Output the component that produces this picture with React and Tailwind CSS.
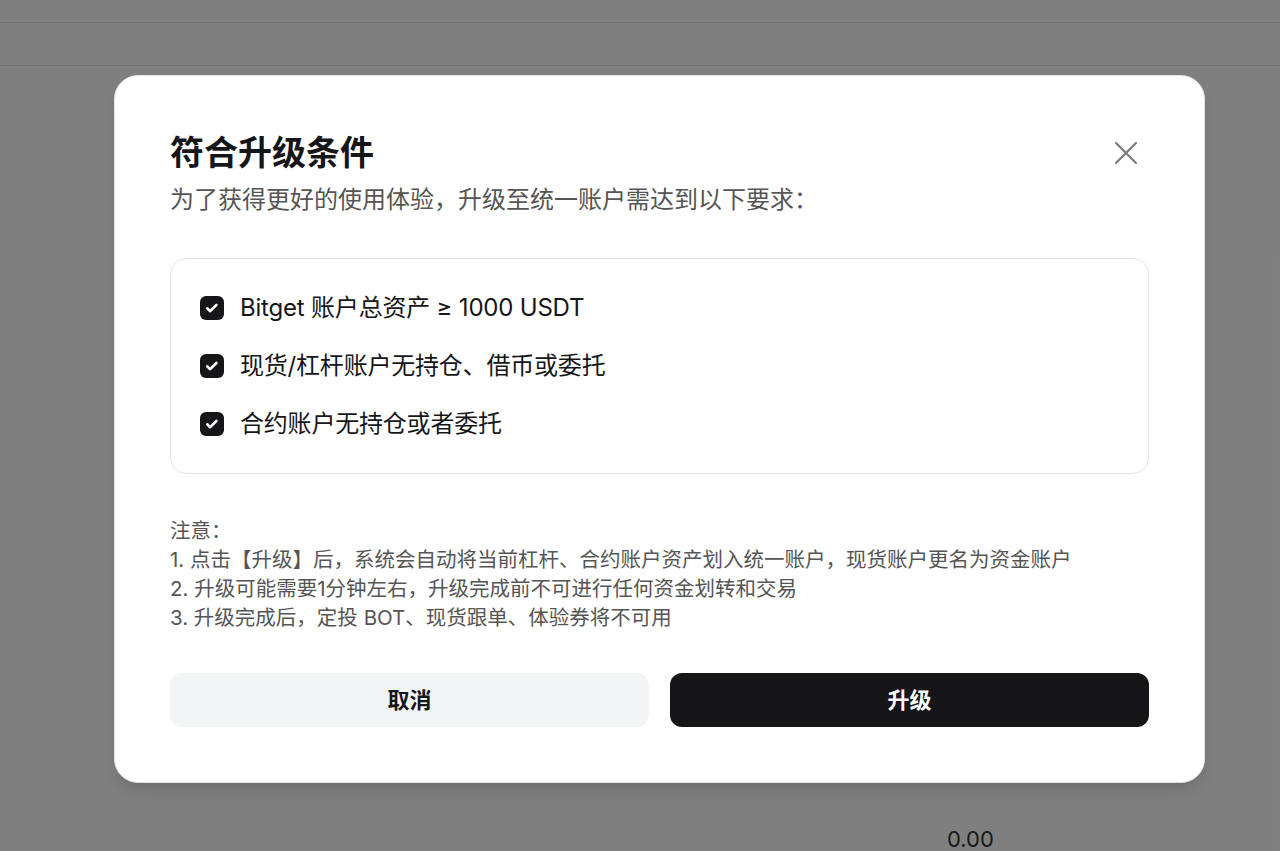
import React from "react";

const font = {
  fontFamily: 'Inter, "Noto Sans CJK SC", "Noto Sans", sans-serif',
};

const conditions = [
  "Bitget 账户总资产 ≥ 1000 USDT",
  "现货/杠杆账户无持仓、借币或委托",
  "合约账户无持仓或者委托",
];

const notes = [
  "注意：",
  "1. 点击【升级】后，系统会自动将当前杠杆、合约账户资产划入统一账户，现货账户更名为资金账户",
  "2. 升级可能需要1分钟左右，升级完成前不可进行任何资金划转和交易",
  "3. 升级完成后，定投 BOT、现货跟单、体验券将不可用",
];

const CheckBox = () => (
  <span className="flex h-[24px] w-[24px] shrink-0 items-center justify-center rounded-[6px] bg-[#161618]">
    <svg width="16" height="16" viewBox="0 0 16 16" fill="none">
      <path
        d="M3.2 8.3l3 2.9 6.2-6.2"
        stroke="#fff"
        strokeWidth="2.6"
        strokeLinecap="round"
        strokeLinejoin="round"
      />
    </svg>
  </span>
);

const UpgradeModal = () => (
  <div className="ml-[114px] mt-[75px] w-[1091px] rounded-[24px] border border-[#e2e2e2] bg-white px-[55px] pt-[57px] pb-[55px] shadow-lg">
    <div className="flex items-center justify-between">
      <h2 className="text-[34px] font-bold leading-[40px] text-[#161618]">
        符合升级条件
      </h2>
      <button type="button" className="mr-[10px] flex h-[26px] w-[26px] items-center justify-center">
        <svg width="24" height="24" viewBox="0 0 24 24" fill="none">
          <path
            d="M2 2l20 20M22 2L2 22"
            stroke="#7a7a7a"
            strokeWidth="2.2"
            strokeLinecap="round"
          />
        </svg>
      </button>
    </div>
    <p className="mt-[10px] text-[24px] leading-[34px] text-[#555]">
      为了获得更好的使用体验，升级至统一账户需达到以下要求：
    </p>

    <div className="mt-[41px] rounded-[16px] border border-[#e4e4e4] px-[29px] py-[20px]">
      {conditions.map((text, i) => (
        <div key={i} className="flex h-[58px] items-center gap-[16px]">
          <CheckBox />
          <span className="text-[24px] tracking-[-0.2px] text-[#161618]">{text}</span>
        </div>
      ))}
    </div>

    <div className="mt-[42px] text-[20.5px] leading-[29px] text-[#555]">
      {notes.map((line, i) => (
        <p key={i}>{line}</p>
      ))}
    </div>

    <div className="mt-[41px] flex gap-[21px]">
      <button
        type="button"
        className="h-[54px] flex-1 rounded-[12px] bg-[#f3f4f6] text-[22px] font-bold text-[#161618]"
      >
        取消
      </button>
      <button
        type="button"
        className="h-[54px] flex-1 rounded-[12px] bg-[#161618] text-[22px] font-bold text-white"
      >
        升级
      </button>
    </div>
  </div>
);

export default function App() {
  return (
    <div className="relative h-[851px] overflow-hidden bg-white" style={font}>
      <div className="h-[23px] border-b border-[#e6e6e6]" />
      <div className="h-[43px] border-b border-[#e6e6e6]" />
      <div className="pl-[947px] pt-[757px] text-[22px] leading-[32px] text-[#333]">0.00</div>

      <div className="absolute inset-0 bg-black/50">
        <UpgradeModal />
      </div>
    </div>
  );
}
